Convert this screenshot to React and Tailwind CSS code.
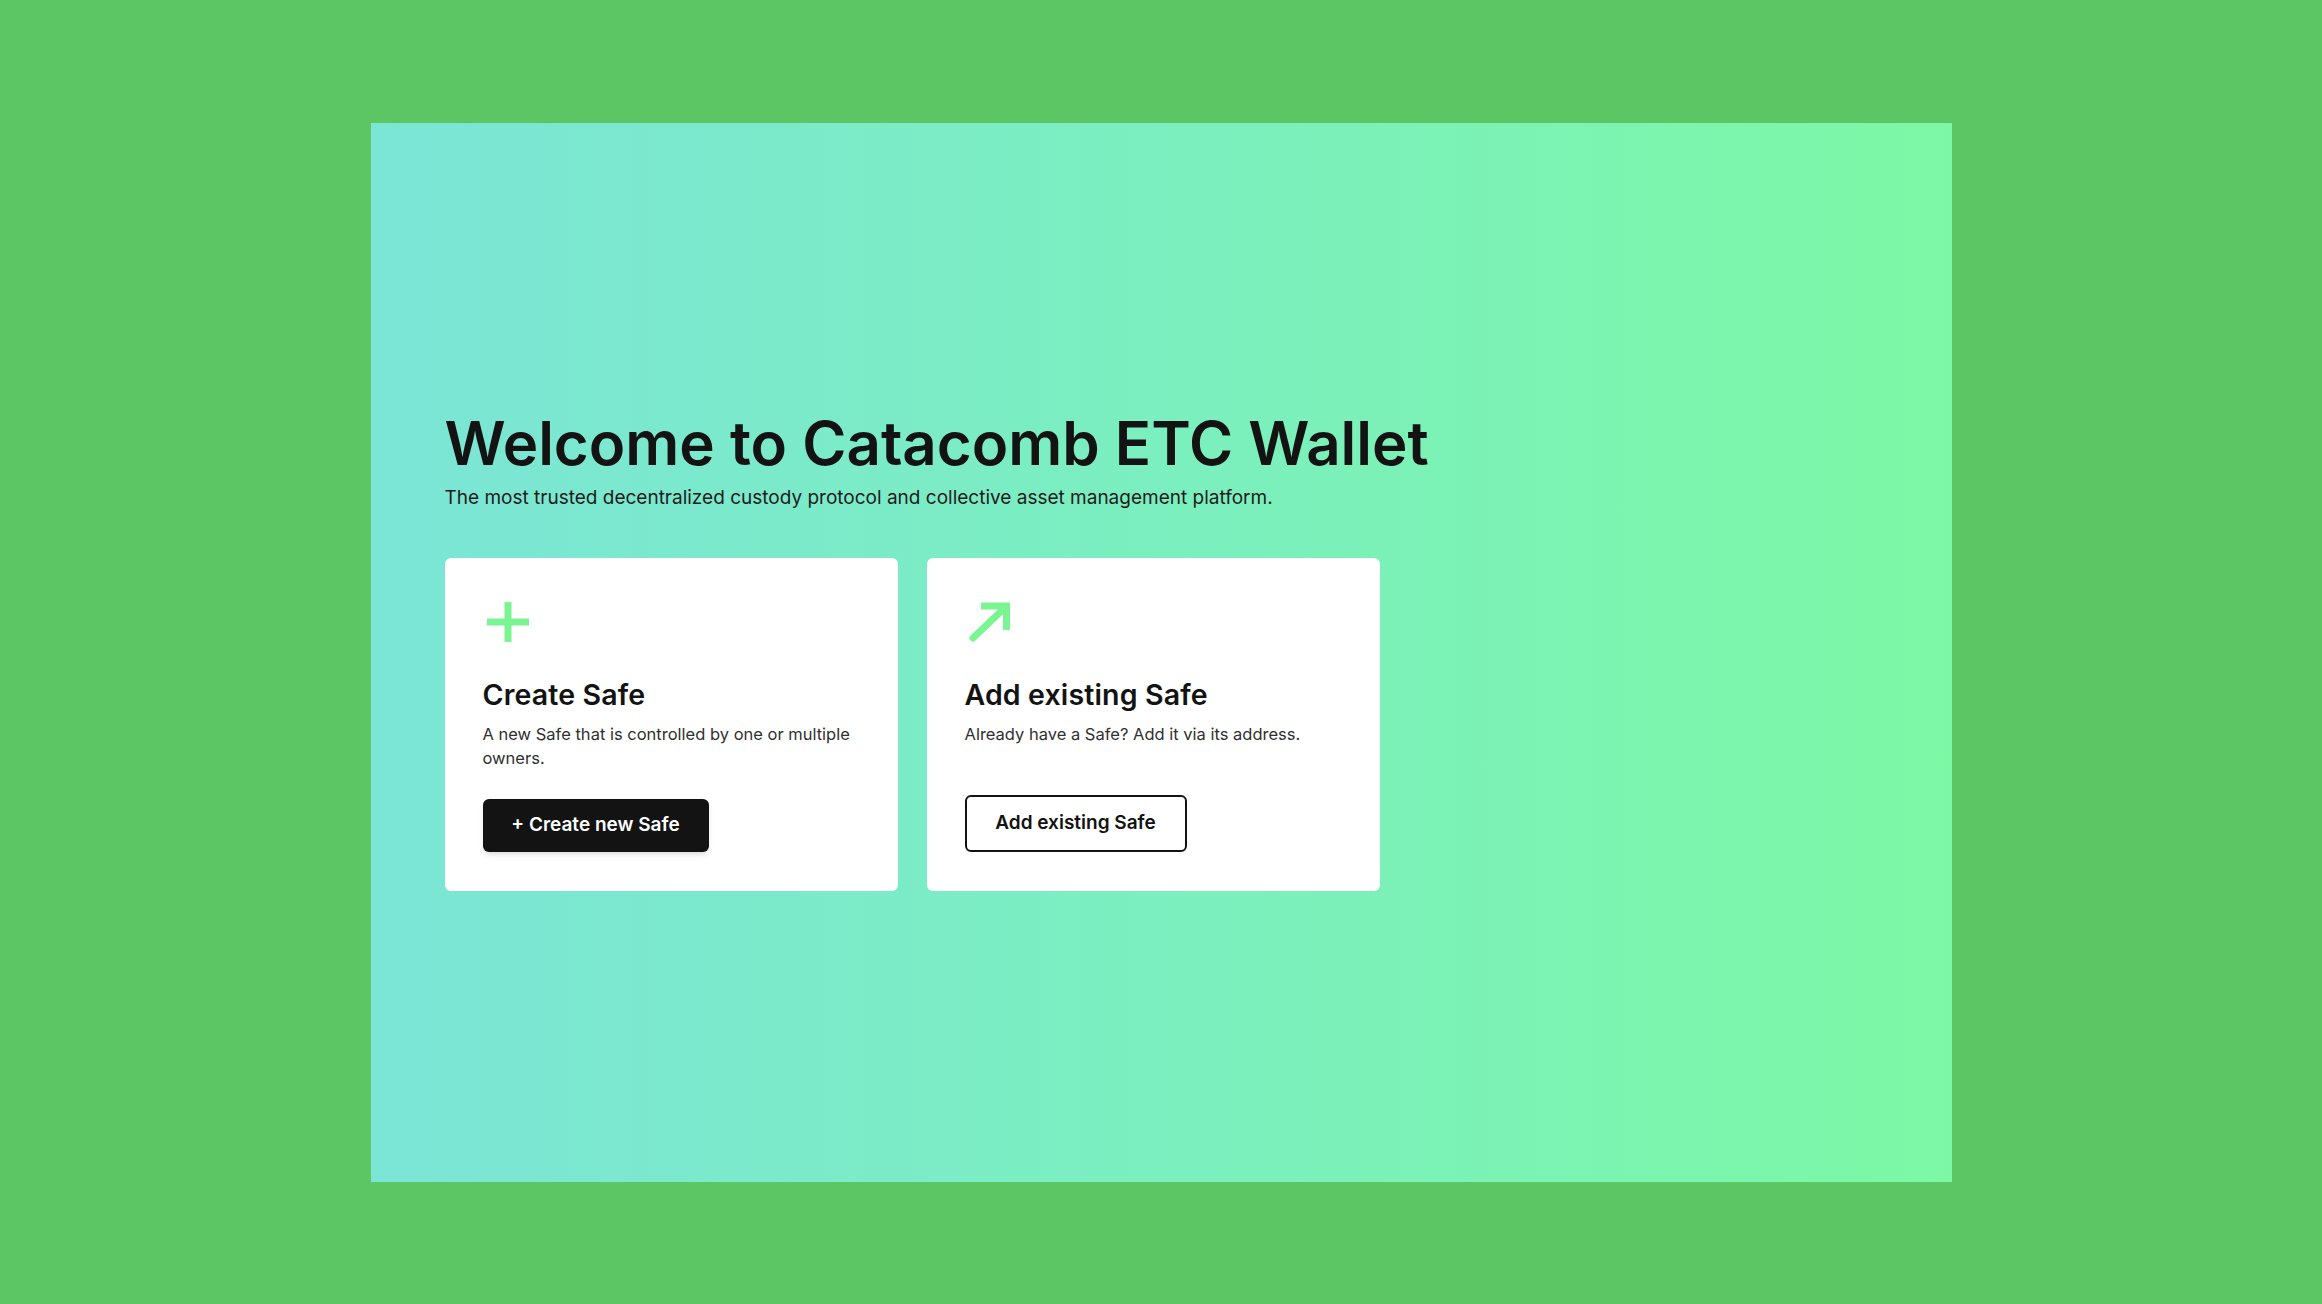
import React from "react";

const FONT = { fontFamily: "Inter, 'Noto Sans', sans-serif" };

const PlusIcon = () => (
  <svg width="42" height="40" viewBox="0 0 42 40" fill="none">
    <path d="M21 0V40M0 20H42" stroke="#7af592" strokeWidth="7" />
  </svg>
);

const ArrowIcon = () => (
  <svg width="42" height="40" viewBox="0 0 42 40" fill="none">
    <path
      d="M12 4H37.5V28"
      stroke="#7af592"
      strokeWidth="7"
      strokeLinejoin="miter"
    />
    <path
      d="M37 4.5L4 36"
      stroke="#7af592"
      strokeWidth="7"
      strokeLinecap="round"
    />
  </svg>
);

const Card = ({ icon, title, text, children }) => (
  <div className="flex h-[333px] w-[453px] flex-col rounded-md bg-white px-[38px] pt-[44px] pb-[39px]">
    <div className="ml-[4px] h-[40px]">{icon}</div>
    <h2 className="mt-[36px] text-[28.5px] leading-[34px] font-semibold tracking-[0.005em] text-[#121312]">
      {title}
    </h2>
    <p className="mt-[10px] text-[16.5px] leading-[24px] text-[#303030]">
      {text}
    </p>
    <div className="mt-auto">{children}</div>
  </div>
);

export default function App() {
  return (
    <div
      className="flex h-[1304px] w-full items-center justify-center bg-[#5cc664]"
      style={FONT}
    >
      <div className="h-[1059px] w-[1581px] bg-gradient-to-r from-[#7be5d6] to-[#7cf8a5] px-[74px] pt-[284px]">
        {/* Header */}
        <h1 className="text-[60px] leading-[72px] font-semibold text-[#121312]">
          Welcome to Catacomb ETC Wallet
        </h1>
        <p className="mt-[5px] text-[19px] leading-[28px] text-[#1c1c1c]">
          The most trusted decentralized custody protocol and collective asset
          management platform.
        </p>

        {/* Cards */}
        <div className="mt-[46px] flex gap-[29px]">
          <Card
            icon={<PlusIcon />}
            title="Create Safe"
            text="A new Safe that is controlled by one or multiple owners."
          >
            <button className="h-[53px] w-[226px] rounded-md bg-[#121312] text-[19px] font-semibold text-white shadow-md">
              + Create new Safe
            </button>
          </Card>
          <Card
            icon={<ArrowIcon />}
            title="Add existing Safe"
            text="Already have a Safe? Add it via its address."
          >
            <button className="h-[57px] w-[222px] rounded-md border-2 border-[#121312] bg-white text-[19px] font-semibold text-[#121312]">
              Add existing Safe
            </button>
          </Card>
        </div>
      </div>
    </div>
  );
}
